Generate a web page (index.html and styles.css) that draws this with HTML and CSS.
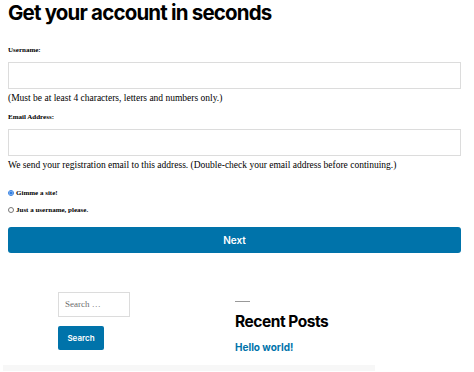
FILE: index.html
```html
<!DOCTYPE html>
<html lang="en">
<head>
    <meta charset="UTF-8">
    <meta name="viewport" content="width=device-width, initial-scale=1.0">
    <title>Get your account in seconds</title>
    <link rel="stylesheet" href="styles.css">
</head>
<body>
    <div class="signup">
        <h2>Get your account in seconds</h2>

        <form class="signup-form">
            <label for="user_name">Username:</label>
            <input type="text" id="user_name" class="field">
            <p class="hint">(Must be at least 4 characters, letters and numbers only.)</p>

            <label for="user_email">Email Address:</label>
            <input type="text" id="user_email" class="field">
            <p class="hint">We send your registration email to this address. (Double-check your email address before continuing.)</p>

            <div class="choices">
                <div class="choice">
                    <input type="radio" id="signupblog" name="signup_for" checked>
                    <label for="signupblog">Gimme a site!</label>
                </div>
                <div class="choice">
                    <input type="radio" id="signupuser" name="signup_for">
                    <label for="signupuser">Just a username, please.</label>
                </div>
            </div>

            <button type="button" class="next">Next</button>
        </form>
    </div>

    <div class="widgets">
        <div class="widget search-widget">
            <input type="search" class="search-field" placeholder="Search …">
            <button type="button" class="search-btn">Search</button>
        </div>
        <div class="widget posts-widget">
            <hr class="rule">
            <h3>Recent Posts</h3>
            <a href="#">Hello world!</a>
        </div>
    </div>

    <div class="footer-strip"></div>
</body>
</html>
```

FILE: styles.css
```css
body {
    margin: 0;
    font-family: 'Liberation Serif', serif;
    color: #000;
    background: #fff;
    overflow: hidden;
}

.signup {
    width: 453px;
    margin-left: 8px;
}

h2 {
    font-family: 'Inter', sans-serif;
    font-weight: 700;
    font-size: 20.5px;
    letter-spacing: -0.04em;
    line-height: 1;
    margin: 3px 0 0;
}

.signup-form {
    display: flex;
    flex-direction: column;
    margin-top: 22px;
}

.signup-form > label {
    font-size: 7px;
    font-weight: 700;
    line-height: 9px;
}

.field {
    box-sizing: border-box;
    width: 100%;
    height: 27px;
    margin-top: 7px;
    border: 1px solid #dcdcdc;
    border-radius: 0;
    background: #fff;
}

.hint {
    font-size: 9.5px;
    line-height: 13px;
    margin: 3px 0 8px;
}

.choices {
    margin-top: 5px;
}

.choice {
    display: flex;
    align-items: center;
    height: 17px;
}

.choice input {
    width: 6px;
    height: 6px;
    margin: 0 2px 0 0;
    accent-color: #2f7de1;
}

.choice label {
    font-size: 7px;
    font-weight: 700;
}

.next {
    margin-top: 8px;
    height: 26px;
    width: 100%;
    border: none;
    border-radius: 3px;
    background: #0073aa;
    color: #fff;
    font-family: 'Inter', sans-serif;
    font-weight: 600;
    font-size: 10px;
    cursor: pointer;
}

.widgets {
    display: flex;
    margin: 39px 0 0 58px;
}

.search-widget {
    display: flex;
    flex-direction: column;
    align-items: flex-start;
    width: 177px;
}

.search-field {
    box-sizing: border-box;
    width: 72px;
    height: 25px;
    padding: 0 6px;
    border: 1px solid #dcdcdc;
    font-family: 'Liberation Serif', serif;
    font-size: 9px;
    color: #6d6d6d;
}

.search-field::placeholder {
    color: #6d6d6d;
}

.search-btn {
    margin-top: 9px;
    width: 46px;
    height: 24px;
    border: none;
    border-radius: 2px;
    background: #0073aa;
    color: #fff;
    font-family: 'Inter', sans-serif;
    font-weight: 600;
    font-size: 8px;
    padding: 0;
}

.posts-widget {
    padding-top: 9px;
}

.rule {
    width: 15px;
    margin: 0;
    border: none;
    border-top: 1px solid #999;
}

h3 {
    font-family: 'Inter', sans-serif;
    font-weight: 700;
    font-size: 15.5px;
    letter-spacing: -0.03em;
    margin: 10px 0 0;
    line-height: 20px;
}

.posts-widget a {
    display: block;
    margin-top: 9px;
    font-family: 'Inter', sans-serif;
    font-weight: 700;
    font-size: 10px;
    line-height: 12px;
    color: #0073aa;
    text-decoration: none;
}

.footer-strip {
    width: 372px;
    height: 6px;
    margin: 12px 0 0 3px;
    background: #f7f7f7;
}
```
